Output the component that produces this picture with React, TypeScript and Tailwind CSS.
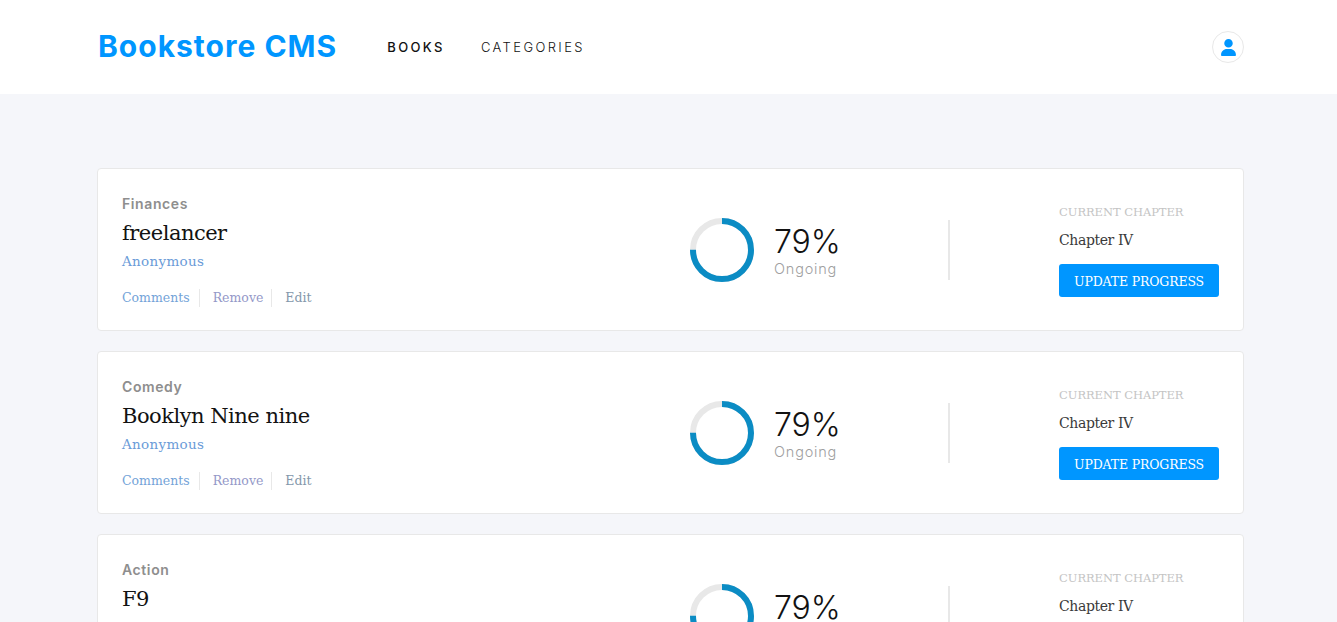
import React from 'react';

const slab = "font-['DejaVu_Serif',serif]";
const mont = "font-['Inter',sans-serif]";

const books = [
  { category: 'Finances', title: 'freelancer' },
  { category: 'Comedy', title: 'Booklyn Nine nine' },
  { category: 'Action', title: 'F9' },
];

function Ring() {
  return (
    <svg width="66" height="66" viewBox="0 0 66 66" className="shrink-0">
      <circle cx="33" cy="33" r="29" fill="none" stroke="#e8e8e8" strokeWidth="6" />
      <circle
        cx="33"
        cy="33"
        r="29"
        fill="none"
        stroke="#0b8cc4"
        strokeWidth="6"
        strokeDasharray="136.7 182.2"
        transform="rotate(-90 33 33)"
      />
    </svg>
  );
}

function BookCard({ category, title }: { category: string; title: string }) {
  return (
    <div className="flex h-[163px] shrink-0 items-start rounded border border-[#e8e8e8] bg-white pl-6 pr-6">
      <div className="w-[567px] pt-[26px]">
        <div className={`${mont} text-[14px] leading-[18px] font-semibold tracking-[0.6px] text-[#8e8e8e]`}>{category}</div>
        <div className={`${slab} mt-[5px] text-[21px] leading-[30px] tracking-[-0.5px] text-[#121212]`}>{title}</div>
        <div className={`${slab} mt-1 text-[13.5px] leading-[18px] font-light tracking-[0.3px] text-[#6a9bd8]`}>Anonymous</div>
        <div className={`${slab} mt-[19px] flex items-center text-[12.5px] leading-[18px] text-[#74a3d8]`}>
          <span className="border-r border-[#e8e8e8] pr-[9px]">Comments</span>
          <span className="border-r border-[#e8e8e8] pl-[13px] pr-2 text-[#9498c8]">Remove</span>
          <span className="pl-[13px] text-[#8497ab]">Edit</span>
        </div>
      </div>
      <div className="flex w-[259px] items-center pt-[48px]">
        <Ring />
        <div className="ml-[19px] mt-[2px]">
          <div className={`${mont} text-[32px] leading-[36px] font-light text-[#121212]`}>79%</div>
          <div className={`${mont} text-[14.5px] leading-[18px] font-light tracking-[0.8px] text-[#a0a0a0]`}>Ongoing</div>
        </div>
      </div>
      <div className="mt-[51px] h-[60px] w-0.5 bg-[#e8e8e8]" />
      <div className="ml-[109px] pt-[35px]">
        <div className={`${slab} text-[11.5px] leading-[16px] tracking-[-0.05px] text-[#c4c4c4]`}>CURRENT CHAPTER</div>
        <div className={`${slab} mt-[10px] text-[14px] leading-[20px] tracking-[-0.4px] text-[#3a3a3a]`}>Chapter IV</div>
        <button className={`${slab} mt-[14px] h-[33px] w-40 rounded-[3px] bg-[#0096ff] pt-[3px] text-[12.5px] tracking-[-0.15px] text-white`}>
          UPDATE PROGRESS
        </button>
      </div>
    </div>
  );
}

export default function App() {
  return (
    <div className="flex h-[622px] flex-col overflow-hidden bg-[#f5f6fa]">
      <header className="flex h-[94px] shrink-0 items-center bg-white pl-[98px] pr-[93px]">
        <div className={`${mont} -mt-[2px] text-[30px] font-bold tracking-[1px] text-[#0096ff]`}>Bookstore CMS</div>
        <nav className={`${mont} ml-[50px] mt-[2px] flex gap-9 text-[13px] tracking-[2.4px]`}>
          <span className="font-medium text-[#121212]">BOOKS</span>
          <span className="font-light text-[#121212]">CATEGORIES</span>
        </nav>
        <div className="ml-auto flex h-8 w-8 items-center justify-center rounded-full border border-[#e8e8e8]">
          <svg width="15" height="17" viewBox="0 0 448 512" fill="#0096ff">
            <path d="M224 256a128 128 0 1 0 0-256 128 128 0 1 0 0 256zm-45.700 48C79.800 304 0 383.800 0 482.300 0 498.700 13.300 512 29.700 512h388.600c16.400 0 29.700-13.300 29.700-29.700C448 383.800 368.200 304 269.700 304h-91.400z" />
          </svg>
        </div>
      </header>
      <main className="flex flex-col gap-5 pl-[97px] pr-[93px] pt-[74px]">
        {books.map((book) => (
          <BookCard key={book.title} {...book} />
        ))}
      </main>
    </div>
  );
}
